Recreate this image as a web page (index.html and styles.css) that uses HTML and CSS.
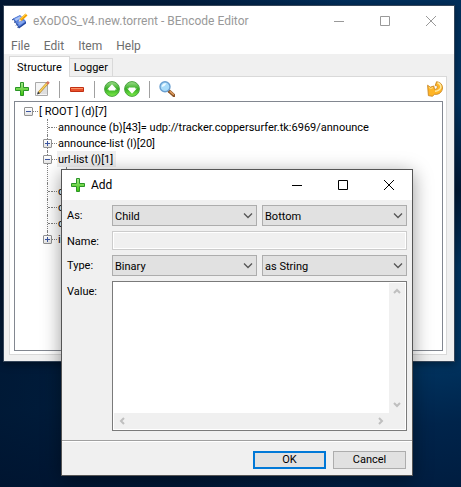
FILE: index.html
```html
<!DOCTYPE html>
<html lang="en">
<head>
<meta charset="utf-8">
<title>BEncode Editor</title>
<link rel="stylesheet" href="styles.css">
</head>
<body>
<main class="desktop">
  <section class="window editor" aria-label="BEncode Editor">
    <header class="titlebar">
      <svg class="icon" width="16" height="16" viewBox="0 0 16 16" aria-hidden="true">
        <path d="M1 6 8 2.500l6 6v2L7 15.500z" fill="#23479f"/>
        <path d="M1 5.500 8 2l6 6.500L7 14z" fill="#5b83dc"/>
        <path d="M2.500 6 8 3.300l1.500 1.500L4 8z" fill="#a9c3f7"/>
        <path d="M6 10l5-2.500 1.500 1.500-5 3z" fill="#86a7ee"/>
        <path d="M0 7l1.500-1M2 9.500l1.500-1M4 12.500l1.500-1.500M5.500 15l1.500-1.500" stroke="#244590"/>
        <path d="M14.500 1.500 8.500 7" stroke="#f5a300" stroke-width="3"/>
        <path d="M14 1 8.500 6" stroke="#ffd75c"/>
        <path d="M6.500 8.800 7.600 6l2 2z" fill="#f7e2bd"/>
      </svg>
      <h1 class="title">eXoDOS_v4.new.torrent - BEncode Editor</h1>
      <div class="caption">
        <button type="button" aria-label="Minimize"><svg width="10" height="10" viewBox="0 0 10 10"><path d="M0 5.500h10"/></svg></button>
        <button type="button" aria-label="Maximize"><svg width="10" height="10" viewBox="0 0 10 10"><path d="M.5.500h9v9h-9z"/></svg></button>
        <button type="button" aria-label="Close"><svg width="10" height="10" viewBox="0 0 10 10"><path d="M0 0l10 10M10 0 0 10"/></svg></button>
      </div>
    </header>
    <nav class="menubar">
      <button type="button">File</button>
      <button type="button">Edit</button>
      <button type="button">Item</button>
      <button type="button">Help</button>
    </nav>
    <div class="client">
      <div class="tabs" role="tablist">
        <button type="button" class="tab selected" role="tab" aria-selected="true">Structure</button>
        <button type="button" class="tab" role="tab" aria-selected="false">Logger</button>
      </div>
      <div class="panel">
        <div class="toolbar">
          <button type="button" aria-label="Add item"><svg width="16" height="16" viewBox="0 0 16 16"><use href="#plus"/></svg></button>
          <button type="button" aria-label="Edit item"><svg width="16" height="16" viewBox="0 0 16 16">
            <path d="M1.500 1.500h12v13h-12z" fill="#f5f5f5" stroke="#a9a9a9"/>
            <path d="M3 13 13 3v10z" fill="#dedede"/>
            <path d="M5 11.500 14 1.500" stroke="#a87822" stroke-width="2.600"/>
            <path d="M5.200 11.200 13.500 2" stroke="#fbd35c" stroke-width="1.500"/>
            <path d="M13 2.800 14.800.8" stroke="#d67362" stroke-width="2.500"/>
            <path d="M3 13.500l1-3 2 2z" fill="#333"/>
          </svg></button>
          <span class="divider"></span>
          <button type="button" aria-label="Delete item"><svg width="16" height="16" viewBox="0 0 16 16">
            <path d="M1.500 6.500h13v4h-13z" fill="#e8512c" stroke="#c22f12"/>
            <path d="M2 7.500h12" stroke="#fa9468"/>
          </svg></button>
          <span class="divider"></span>
          <button type="button" aria-label="Move up"><svg width="16" height="16" viewBox="0 0 16 16">
            <use href="#ball"/><path d="M8 3.200l4.800 5.300h-1.600v1H4.800v-1H3.200z" fill="#fff"/>
          </svg></button>
          <button type="button" aria-label="Move down"><svg width="16" height="16" viewBox="0 0 16 16">
            <use href="#ball"/><path d="M8 12.800l4.800-5.300h-1.600v-1H4.800v1H3.200z" fill="#fff"/>
          </svg></button>
          <span class="divider"></span>
          <button type="button" aria-label="Find"><svg width="16" height="16" viewBox="0 0 16 16">
            <path d="M10 10l5 4.500" stroke="#8a5426" stroke-width="3.200" stroke-linecap="round"/>
            <path d="M10.800 10.200l4 3.600" stroke="#e5a264" stroke-width="1.400"/>
            <circle cx="6" cy="5.800" r="5" fill="#a9dcfa" stroke="#6a9fd0" stroke-width="1.400"/>
            <path d="M2.800 6A3.500 3.500 0 0 1 7.500 2.600Q6.500 5 2.800 6z" fill="#f0fbff"/>
          </svg></button>
          <button type="button" class="end" aria-label="Reload"><svg width="16" height="16" viewBox="0 0 16 16">
            <path d="M.6 4.200 3.200 6.200 6.800 5l.8 3.600Q10.800 8.200 10.400 5.800 9.800 4.200 8.200 4.600L9.600.7Q15.400 1.500 15.500 7 15 12.500 9.500 13.400L7.500 13.200 5.500 15.300 1.400 14.600z" fill="#ffb526" stroke="#c98722" stroke-width=".9"/>
            <path d="M10.500 1.800Q14.300 3.300 13.800 6.800 12.500 9.800 8 10.200" fill="none" stroke="#ffe9a0" stroke-width="1.500"/>
            <path d="M1.800 6.200 3.500 7.600 6 6.600" fill="none" stroke="#ffe08a"/>
          </svg></button>
        </div>
        <div class="tree">
          <ul class="root">
            <li><span class="row"><button type="button" class="toggle open" aria-label="Collapse"></button><span class="label">[ ROOT ] (d)[7]</span></span>
              <ul>
                <li><span class="row"><span class="stub"></span><span class="label">announce (b)[43]= udp://tracker.coppersurfer.tk:6969/announce</span></span></li>
                <li><span class="row"><button type="button" class="toggle" aria-label="Expand"></button><span class="label">announce-list (l)[20]</span></span></li>
                <li><span class="row"><button type="button" class="toggle open" aria-label="Collapse"></button><span class="label current">url-list (l)[1]</span></span>
                  <ul>
                    <li><span class="row"><span class="stub"></span></span></li>
                  </ul>
                </li>
                <li><span class="row"><span class="stub"></span><span class="label">c</span></span></li>
                <li><span class="row"><span class="stub"></span><span class="label">c</span></span></li>
                <li><span class="row"><span class="stub"></span><span class="label">c</span></span></li>
                <li><span class="row"><button type="button" class="toggle" aria-label="Expand"></button><span class="label">in</span></span></li>
              </ul>
            </li>
          </ul>
        </div>
      </div>
    </div>
  </section>

  <form class="window dialog" aria-label="Add">
    <header class="titlebar">
      <svg class="icon" width="16" height="16" viewBox="0 0 16 16" aria-hidden="true">
        <defs>
          <linearGradient id="green" x1="0" y1="0" x2="0" y2="1"><stop offset="0" stop-color="#a6e88c"/><stop offset="1" stop-color="#3fc40c"/></linearGradient>
          <linearGradient id="orb" x1="0" y1="0" x2="0" y2="1"><stop offset="0" stop-color="#9ddd8b"/><stop offset=".5" stop-color="#35ad22"/><stop offset="1" stop-color="#7fee4b"/></linearGradient>
          <g id="plus"><path d="M6.500 1.500h3v5h5v3h-5v5h-3v-5h-5v-3h5z" fill="url(#green)" stroke="#2a9527"/></g>
          <g id="ball"><circle cx="8" cy="8" r="7.400" fill="url(#orb)" stroke="#4ba342"/></g>
        </defs>
        <use href="#plus"/>
      </svg>
      <h2 class="title">Add</h2>
      <div class="caption">
        <button type="button" aria-label="Minimize"><svg width="10" height="10" viewBox="0 0 10 10"><path d="M0 5.500h10"/></svg></button>
        <button type="button" aria-label="Maximize"><svg width="10" height="10" viewBox="0 0 10 10"><path d="M.5.500h9v9h-9z"/></svg></button>
        <button type="button" aria-label="Close"><svg width="10" height="10" viewBox="0 0 10 10"><path d="M0 0l10 10M10 0 0 10"/></svg></button>
      </div>
    </header>
    <div class="fields">
      <label for="as">As:</label>
      <div class="pair">
        <div class="combo"><select id="as"><option>Child</option></select><svg width="10" height="6" viewBox="0 0 10 6"><path d="M1 .5l4 4 4-4"/></svg></div>
        <div class="combo"><select aria-label="Position"><option>Bottom</option></select><svg width="10" height="6" viewBox="0 0 10 6"><path d="M1 .5l4 4 4-4"/></svg></div>
      </div>
      <label for="name">Name:</label>
      <input id="name" type="text" disabled>
      <label for="type">Type:</label>
      <div class="pair">
        <div class="combo"><select id="type"><option>Binary</option></select><svg width="10" height="6" viewBox="0 0 10 6"><path d="M1 .5l4 4 4-4"/></svg></div>
        <div class="combo"><select aria-label="Format"><option>as String</option></select><svg width="10" height="6" viewBox="0 0 10 6"><path d="M1 .5l4 4 4-4"/></svg></div>
      </div>
      <label for="value">Value:</label>
      <div class="memo">
        <textarea id="value"></textarea>
        <div class="bar vertical" aria-hidden="true">
          <svg width="8" height="7" viewBox="0 0 8 7"><path d="M1 5l3-3 3 3"/></svg>
          <svg width="8" height="7" viewBox="0 0 8 7"><path d="M1 2l3 3 3-3"/></svg>
        </div>
        <div class="bar horizontal" aria-hidden="true">
          <svg width="7" height="8" viewBox="0 0 7 8"><path d="M5 1 2 4l3 3"/></svg>
          <svg width="7" height="8" viewBox="0 0 7 8"><path d="M2 1l3 3-3 3"/></svg>
        </div>
        <div class="corner"></div>
      </div>
    </div>
    <footer class="actions">
      <button type="submit" class="default">OK</button>
      <button type="button">Cancel</button>
    </footer>
  </form>
</main>
</body>
</html>
```

FILE: styles.css
```css
* { box-sizing: border-box; }

body {
  margin: 0;
  font: 12px/16px Roboto, sans-serif;
  color: #000;
}

button, input, select, textarea { font: inherit; color: inherit; }

ul { list-style: none; margin: 0; padding: 0; }

.desktop {
  position: relative;
  min-height: 100vh;
  overflow: hidden;
  background: linear-gradient(172deg, #002b57 0%, #003462 30%, #001834 46%, #00335f 60%, #003562 75%, #00244b 88%, #001d40 100%);
}

.desktop::before {
  content: "";
  position: absolute;
  inset: 0;
  background: linear-gradient(90deg, rgba(0, 16, 40, .75) 0, rgba(0, 16, 40, .55) 40%, transparent 75%);
}

.window {
  position: absolute;
  background: #f0f0f0;
}

.editor {
  left: 3px;
  right: 6px;
  top: 5px;
  border: 1px solid #35465a;
  box-shadow: 0 2px 8px rgba(0, 0, 0, .4);
}

.dialog {
  left: 61px;
  right: 48px;
  top: 169px;
  border: 1px solid #555;
  box-shadow: 0 4px 18px rgba(0, 0, 0, .4);
}

.titlebar {
  display: flex;
  align-items: center;
  height: 30px;
  padding-left: 8px;
  background: #fff;
}

.title {
  flex: 1;
  margin: 0 0 0 5px;
  font-size: 12px;
  font-weight: 400;
  white-space: nowrap;
}

.caption { display: flex; gap: 36px; margin-right: 18px; }
.caption button { display: block; padding: 0; border: 0; background: none; }
.caption svg { display: block; }
.caption path { fill: none; stroke: #000; }
.editor .caption path { stroke: #999; }
.editor .title { color: #999; }

.menubar {
  display: flex;
  gap: 14px;
  height: 18px;
  padding-left: 7px;
  background: #fff;
  color: #6d6d6d;
}

.menubar button { padding: 0; border: 0; background: none; line-height: 20px; }

.client { padding: 2px 7px 6px 5px; font-size: 11px; }

.tabs { display: flex; align-items: flex-end; height: 20px; }

.tab {
  height: 18px;
  padding: 0 4px;
  border: 1px solid #d9d9d9;
  border-left: 0;
  border-bottom: 0;
  background: #f0f0f0;
  line-height: 17px;
}

.tab.selected {
  height: 21px;
  margin-bottom: -1px;
  padding: 0 7px;
  border-left: 1px solid #d9d9d9;
  background: #fff;
  z-index: 1;
}

.panel {
  padding: 0 3px 3px 4px;
  border: 1px solid #d9d9d9;
  background: #fff;
}

.toolbar { display: flex; align-items: center; gap: 4px; height: 24px; }
.toolbar button { width: 16px; height: 16px; padding: 0; border: 0; background: none; }
.toolbar svg, .icon { display: block; flex: none; }
.divider { width: 1px; height: 17px; margin: 0 5px; background: #a0a0a0; }
.toolbar .end { margin-left: auto; }

.tree {
  min-height: 250px;
  padding: 1px 0 0 9px;
  border: 1px solid #828790;
}

.tree ul ul { margin-left: 19px; }
.tree li { position: relative; }

.tree ul ul > li::before {
  content: "";
  position: absolute;
  left: 4px;
  top: 0;
  bottom: 0;
  border-left: 1px dotted #808080;
}

.tree ul ul > li:last-child::before { bottom: 8px; }

.row { display: flex; align-items: center; height: 16px; }

.row::before {
  content: "";
  order: 1;
  width: 5px;
  border-top: 1px dotted #808080;
}

.label { order: 2; height: 16px; padding: 0 3px 0 1px; line-height: 18px; white-space: nowrap; }
.label.current { background: #f0f0f0; }
.stub { width: 9px; padding-left: 5px; }
.stub::before { content: ""; display: block; border-top: 1px dotted #808080; }

.toggle {
  position: relative;
  width: 9px;
  height: 9px;
  padding: 0;
  border: 1px solid #919191;
  border-radius: 1px;
  background: linear-gradient(#fff, #e4e4e4);
}

.toggle::before {
  content: "";
  position: absolute;
  left: 1px;
  top: 3px;
  width: 5px;
  height: 1px;
  background: #3b55a0;
}

.toggle:not(.open)::after {
  content: "";
  position: absolute;
  left: 3px;
  top: 1px;
  width: 1px;
  height: 5px;
  background: #3b55a0;
}

.dialog { font-size: 11px; }

.fields {
  display: grid;
  grid-template-columns: 45px 1fr;
  row-gap: 5px;
  padding: 5px 5px 9px;
}

.fields label { padding-top: 3px; }
.pair { display: grid; grid-template-columns: 1fr 1fr; gap: 5px; }
.combo { position: relative; }

.combo select {
  display: block;
  width: 100%;
  height: 21px;
  padding: 2px 20px 0 2px;
  border: 1px solid #adadad;
  border-radius: 0;
  background: #e1e1e1;
  appearance: none;
}

.combo svg { position: absolute; right: 4px; top: 8px; pointer-events: none; }
.combo path { fill: none; stroke: #555; stroke-width: 1.300; }

.fields input {
  width: 100%;
  height: 19px;
  padding: 0;
  border: 1px solid #ccc;
  outline: 1px solid #fff;
  outline-offset: -2px;
  background: #f0f0f0;
}

.memo {
  display: grid;
  grid-template-columns: 1fr 16px;
  grid-template-rows: 130px 16px;
  padding: 1px;
  border: 1px solid #7a7a7a;
  background: #fff;
}

.memo textarea { width: 100%; height: 100%; padding: 2px; border: 0; outline: 0; resize: none; }
.bar, .corner { background: #f0f0f0; }
.bar { display: flex; justify-content: space-between; align-items: center; padding: 5px; }
.vertical { flex-direction: column; }
.bar path { fill: none; stroke: #bfbfbf; stroke-width: 2; }

.actions {
  display: flex;
  justify-content: flex-end;
  gap: 7px;
  padding: 10px 6px 6px;
  border-top: 1px solid #a0a0a0;
  box-shadow: inset 0 1px #fff;
}

.actions button {
  width: 73px;
  height: 18px;
  padding: 0;
  border: 1px solid #adadad;
  background: #e1e1e1;
  line-height: 16px;
}

.actions .default { border: 2px solid #0078d7; line-height: 14px; }
```
